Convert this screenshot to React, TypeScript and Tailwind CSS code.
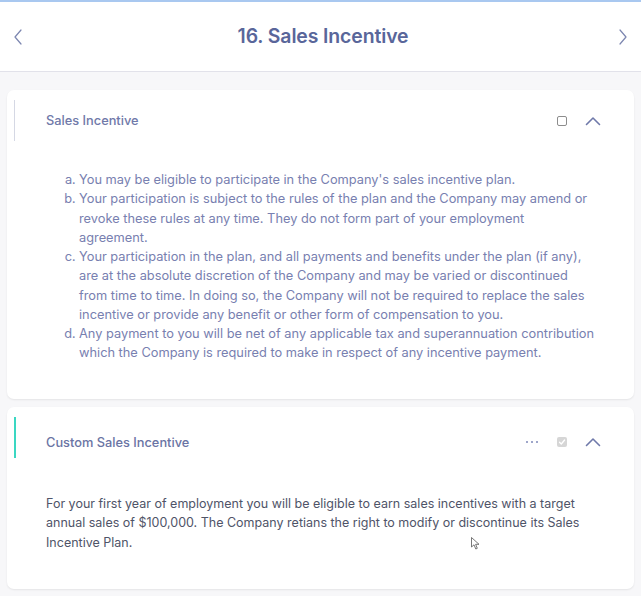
import React from "react";

const font = { fontFamily: "Inter, 'Noto Sans', sans-serif" };

function ChevronUp() {
  return (
    <svg width="16" height="10" viewBox="0 0 16 10" fill="none">
      <path d="M1.5 8.5 L8 2 L14.5 8.5" stroke="#6f79aa" strokeWidth="1.6" strokeLinecap="round" strokeLinejoin="round" />
    </svg>
  );
}

export default function App() {
  return (
    <div className="w-[641px] h-[596px] bg-[#f7f7f9] overflow-hidden relative" style={font}>
      <div className="h-[72px] bg-white border-t-2 border-[#a9c8f0] border-b border-b-[#e2e2ea] flex items-center justify-between px-[13px]">
        <svg width="10" height="16" viewBox="0 0 10 16" fill="none">
          <path d="M8 1 L2 8 L8 15" stroke="#7c86b0" strokeWidth="1.2" strokeLinecap="round" strokeLinejoin="round" />
        </svg>
        <div className="pl-[5px] text-[19.4px] font-semibold text-[#59669a] tracking-[-0.1px]">16. Sales Incentive</div>
        <svg width="10" height="16" viewBox="0 0 10 16" fill="none">
          <path d="M2 1 L8 8 L2 15" stroke="#7c86b0" strokeWidth="1.2" strokeLinecap="round" strokeLinejoin="round" />
        </svg>
      </div>

      <div className="pt-[18px] pl-[7px] pr-[7px] flex flex-col gap-[8px]">
        <div className="bg-white rounded-[7px] shadow-[0_1px_2px_rgba(0,0,0,0.08)] h-[309px] pt-[10px]">
          <div className="flex items-center h-[41px] pl-[7px] pr-[33px]">
            <div className="w-[1px] h-[41px] bg-[#d5d8e4]" />
            <div className="ml-[31px] pt-[1px] text-[12.8px] font-medium text-[#7079a9]">Sales Incentive</div>
            <div className="ml-auto flex items-center gap-[18px]">
              <div className="w-[10px] h-[10px] border border-[#8d8d8d] rounded-[2px]" />
              <ChevronUp />
            </div>
          </div>
          <ol className="mt-[29px] pl-[72px] pr-[40px] text-[12.8px] leading-[19.25px] text-[#7880b0] list-[lower-alpha]">
            <li>You may be eligible to participate in the Company's sales incentive plan.</li>
            <li>Your participation is subject to the rules of the plan and the Company may amend or revoke these rules at any time. They do not form part of your employment agreement.</li>
            <li>Your participation in the plan, and all payments and benefits under the plan (if any), are at the absolute discretion of the Company and may be varied or discontinued from time to time. In doing so, the Company will not be required to replace the sales incentive or provide any benefit or other form of compensation to you.</li>
            <li>Any payment to you will be net of any applicable tax and superannuation contribution which the Company is required to make in respect of any incentive payment.</li>
          </ol>
        </div>

        <div className="bg-white rounded-[7px] shadow-[0_1px_2px_rgba(0,0,0,0.08)] h-[182px] pt-[10px]">
          <div className="flex items-center h-[41px] pl-[7px] pr-[33px]">
            <div className="w-[2px] h-[41px] bg-[#3ad7c2]" />
            <div className="ml-[30px] pt-[10px] text-[12.8px] font-medium text-[#6a74a4]">Custom Sales Incentive</div>
            <div className="ml-auto flex items-center pt-[9px]">
              <div className="flex gap-[3px] mr-[19px]">
                <span className="w-[2px] h-[2px] rounded-full bg-[#7e88b8]" />
                <span className="w-[2px] h-[2px] rounded-full bg-[#7e88b8]" />
                <span className="w-[2px] h-[2px] rounded-full bg-[#7e88b8]" />
              </div>
              <div className="w-[10px] h-[10px] bg-[#d6d6d6] rounded-[2px] flex items-center justify-center mr-[18px]">
                <svg width="8" height="8" viewBox="0 0 8 8" fill="none">
                  <path d="M1.5 4.2 L3.3 6 L6.6 2" stroke="#fff" strokeWidth="1.3" strokeLinecap="round" strokeLinejoin="round" />
                </svg>
              </div>
              <ChevronUp />
            </div>
          </div>
          <p className="mt-[36px] pl-[39px] pr-[36px] text-[12.5px] leading-[19.25px] text-[#4f5468]">
            For your first year of employment you will be eligible to earn sales incentives with a target annual sales of $100,000. The Company retians the right to modify or discontinue its Sales Incentive Plan.
          </p>
        </div>
      </div>

      <svg className="absolute left-[471px] top-[537px]" width="9" height="13" viewBox="0 0 9 13" fill="none">
        <path d="M0.5 0.5 L0.5 10 L3 7.8 L4.8 12 L6.3 11.3 L4.6 7.3 L8 7.3 Z" fill="#fff" stroke="#555" strokeWidth="0.8" strokeLinejoin="round" />
      </svg>
    </div>
  );
}
